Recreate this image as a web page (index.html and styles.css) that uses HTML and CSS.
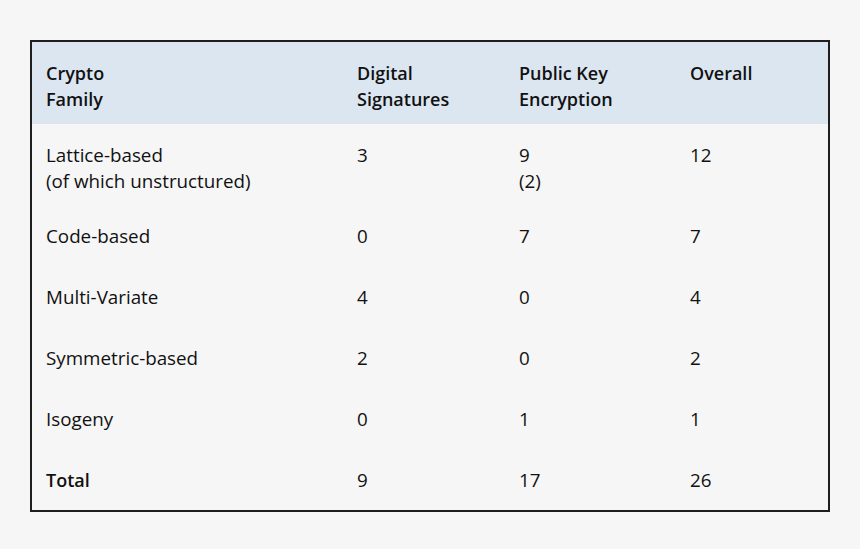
FILE: index.html
```html
<!DOCTYPE html>
<html>
<head>
<meta charset="utf-8">
<link rel="stylesheet" href="styles.css">
</head>
<body>
<div class="page">
  <div class="table">
    <div class="row head">
      <div class="cell">Crypto<br>Family</div>
      <div class="cell">Digital<br>Signatures</div>
      <div class="cell">Public Key<br>Encryption</div>
      <div class="cell">Overall</div>
    </div>
    <div class="row first">
      <div class="cell">Lattice-based<br>(of which unstructured)</div>
      <div class="cell">3</div>
      <div class="cell">9<br>(2)</div>
      <div class="cell">12</div>
    </div>
    <div class="row">
      <div class="cell">Code-based</div>
      <div class="cell">0</div>
      <div class="cell">7</div>
      <div class="cell">7</div>
    </div>
    <div class="row">
      <div class="cell">Multi-Variate</div>
      <div class="cell">4</div>
      <div class="cell">0</div>
      <div class="cell">4</div>
    </div>
    <div class="row">
      <div class="cell">Symmetric-based</div>
      <div class="cell">2</div>
      <div class="cell">0</div>
      <div class="cell">2</div>
    </div>
    <div class="row">
      <div class="cell">Isogeny</div>
      <div class="cell">0</div>
      <div class="cell">1</div>
      <div class="cell">1</div>
    </div>
    <div class="row total">
      <div class="cell">Total</div>
      <div class="cell">9</div>
      <div class="cell">17</div>
      <div class="cell">26</div>
    </div>
  </div>
</div>
</body>
</html>
```

FILE: styles.css
```css
* { box-sizing: border-box; }
html, body {
  margin: 0;
  padding: 0;
  background: #f6f6f6;
}
body {
  width: 860px;
  height: 549px;
  font-family: "Open Sans", Lato, sans-serif;
  font-size: 18.8px;
  color: #111;
}
.page {
  padding: 40px 30px 0 30px;
}
.table {
  width: 800px;
  border: 2px solid #1e1e1e;
  background: #f6f6f6;
}
.row {
  display: grid;
  grid-template-columns: 311px 162px 171px 152px;
  height: 61px;
}
.cell {
  padding: 18px 0 0 14px;
  line-height: 26px;
}
.row.head {
  height: 82px;
  background: #dce6f1;
  font-weight: 600;
  font-size: 18px;
}
.row.first {
  height: 81px;
}
.row.total .cell:first-child {
  font-weight: 600;
  font-size: 18px;
}
```
